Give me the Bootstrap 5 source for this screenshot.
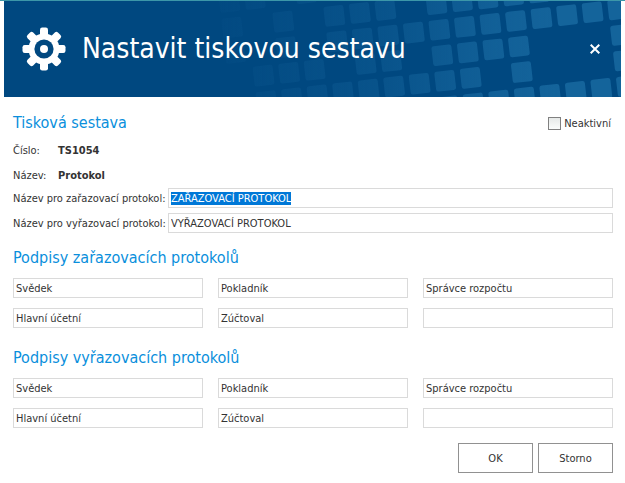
<!DOCTYPE html>
<html lang="cs">
<head>
<meta charset="utf-8">
<meta name="viewport" content="width=device-width, initial-scale=1">
<title>Nastavit tiskovou sestavu</title>
<link href="https://cdn.jsdelivr.net/npm/bootstrap@5.3.0/dist/css/bootstrap.min.css" rel="stylesheet">
<style>
  body { font-family: Tahoma, "DejaVu Sans Condensed", "Noto Sans", sans-serif; font-size: 11px; line-height: 15px; color: #333; background: #fff; border-top: 1px solid #3c97a9; }
  .banner { height: 96px; margin: 0 4px; padding: 0 18px; background: #004880; color: #fff; }
  .banner-tiles { position: absolute; top: 0; right: 0; }
  .banner-gear { width: 44px; height: 44px; }
  .banner h1 { font-size: 28px; line-height: 36px; margin: 0 0 0 16px; }
  .banner-close { width: 16px; height: 16px; }
  .dialog-body { padding: 15px 12px 10px 13px; }
  h2 { font-size: 16px; line-height: 22px; color: #0a8fdc; margin: 0; }
  h1, h2 { font-weight: 400; }
  .facts { grid-template-columns: 45px 1fr; row-gap: 10px; margin: 9px 0 5px; }
  .fields { display: grid; grid-template-columns: 155px 1fr; row-gap: 5px; }
  .signatures { display: grid; grid-template-columns: repeat(3, 1fr); gap: 10px 15px; margin-top: 9px; }
  .group-gap { margin-top: 14px; }
  .group-next { margin-top: 19px; }
  .form-control { height: 20px; min-height: 0; padding: 0 2px; font-size: 11px; line-height: 13px; color: #333; border-color: #dadada; }
  .form-control:focus { border-color: #dadada; box-shadow: none; color: #333; }
  .form-control::selection { background: #0078d7; color: #fff; }
  .inactive { gap: 3px; padding-right: 2px; }
  .inactive-box { appearance: none; width: 13px; height: 13px; margin: 0; border: 1px solid #808080; background: linear-gradient(#e6e9e8, #fafcfb); }
  .inactive-box:checked { background: #0078d7; }
  .btn { --bs-btn-font-size: 11px; --bs-btn-line-height: 15px; --bs-btn-color: #333; --bs-btn-border-color: #919191; --bs-btn-bg: #fff; --bs-btn-hover-color: #333; --bs-btn-hover-bg: #eef6fb; --bs-btn-hover-border-color: #919191; width: 75px; height: 30px; }
  .actions { gap: 5px; margin-top: 15px; }
</style>
</head>
<body>
<header class="banner position-relative overflow-hidden d-flex align-items-center">
  <svg class="banner-tiles" width="421" height="96" viewBox="200 1 421 96" aria-hidden="true">
    <defs>
      <linearGradient id="fade" gradientUnits="userSpaceOnUse" x1="210" y1="0" x2="560" y2="0">
        <stop offset="0" stop-color="#14649b" stop-opacity="0.06"/>
        <stop offset="0.5" stop-color="#14649b" stop-opacity="0.42"/>
        <stop offset="0.8" stop-color="#14649b" stop-opacity="0.85"/>
        <stop offset="1" stop-color="#14649b"/>
      </linearGradient>
      <mask id="fade-mask" maskUnits="userSpaceOnUse" x="200" y="0" width="421" height="97">
        <g id="tiles" fill="#fff" transform="translate(516 21) rotate(-6.5)"></g>
      </mask>
    </defs>
    <rect x="200" y="0" width="421" height="97" fill="url(#fade)" mask="url(#fade-mask)"/>
  </svg>
  <svg class="banner-gear position-relative flex-shrink-0" viewBox="-22 -22 44 44" fill="#fff" aria-hidden="true">
    <g>
      <rect x="-4" y="-21.5" width="8" height="43" rx="2.2"/>
      <rect x="-4" y="-21.5" width="8" height="43" rx="2.2" transform="rotate(45)"/>
      <rect x="-4" y="-21.5" width="8" height="43" rx="2.2" transform="rotate(90)"/>
      <rect x="-4" y="-21.5" width="8" height="43" rx="2.2" transform="rotate(135)"/>
    </g>
    <circle r="15.5"/>
    <circle r="9.6" fill="#004880"/>
    <circle r="4"/>
  </svg>
  <h1 class="position-relative flex-grow-1">Nastavit tiskovou sestavu</h1>
  <button type="button" class="banner-close position-relative border-0 bg-transparent p-0 d-flex align-items-center justify-content-center" aria-label="Zavřít">
    <svg width="10" height="10" viewBox="0 0 10 10" stroke="#fff" stroke-width="2" aria-hidden="true"><path d="M.7.7l8.6 8.6M9.3.7L.7 9.3"/></svg>
  </button>
</header>

<form class="dialog-body">
  <div class="d-flex justify-content-between">
    <h2>Tisková sestava</h2>
    <div class="inactive d-flex align-items-center">
      <input class="inactive-box" type="checkbox" id="inactive">
      <label for="inactive">Neaktivní</label>
    </div>
  </div>
  <dl class="facts d-grid">
    <dt class="fw-normal">Číslo:</dt><dd class="fw-bold m-0">TS1054</dd>
    <dt class="fw-normal">Název:</dt><dd class="fw-bold m-0">Protokol</dd>
  </dl>
  <div class="fields align-items-center">
    <label class="text-nowrap" for="name-in">Název pro zařazovací protokol:</label>
    <input class="form-control rounded-0" type="text" id="name-in" value="ZAŘAZOVACÍ PROTOKOL">
    <label class="text-nowrap" for="name-out">Název pro vyřazovací protokol:</label>
    <input class="form-control rounded-0" type="text" id="name-out" value="VYŘAZOVACÍ PROTOKOL">
  </div>

  <h2 class="group-gap" id="sign-in">Podpisy zařazovacích protokolů</h2>
  <div class="signatures" role="group" aria-labelledby="sign-in">
    <input class="form-control rounded-0" type="text" aria-label="Podpis 1" value="Svědek">
    <input class="form-control rounded-0" type="text" aria-label="Podpis 2" value="Pokladník">
    <input class="form-control rounded-0" type="text" aria-label="Podpis 3" value="Správce rozpočtu">
    <input class="form-control rounded-0" type="text" aria-label="Podpis 4" value="Hlavní účetní">
    <input class="form-control rounded-0" type="text" aria-label="Podpis 5" value="Zúčtoval">
    <input class="form-control rounded-0" type="text" aria-label="Podpis 6">
  </div>

  <h2 class="group-next" id="sign-out">Podpisy vyřazovacích protokolů</h2>
  <div class="signatures" role="group" aria-labelledby="sign-out">
    <input class="form-control rounded-0" type="text" aria-label="Podpis 1" value="Svědek">
    <input class="form-control rounded-0" type="text" aria-label="Podpis 2" value="Pokladník">
    <input class="form-control rounded-0" type="text" aria-label="Podpis 3" value="Správce rozpočtu">
    <input class="form-control rounded-0" type="text" aria-label="Podpis 4" value="Hlavní účetní">
    <input class="form-control rounded-0" type="text" aria-label="Podpis 5" value="Zúčtoval">
    <input class="form-control rounded-0" type="text" aria-label="Podpis 6">
  </div>

  <div class="actions d-flex justify-content-end">
    <button type="submit" class="btn rounded-0 p-0">OK</button>
    <button type="button" class="btn rounded-0 p-0">Storno</button>
  </div>
</form>
<script src="https://cdn.jsdelivr.net/npm/bootstrap@5.3.0/dist/js/bootstrap.bundle.min.js"></script>
<script>
  // Banner mosaic: occupied columns of each tilted row
  const rows = {
    '-2': [-11, -10, -8],
    '-1': [-11, -9, -7, -6, -5, -3, -2, -1, 0, 1],
    '0': [-11, -9, -7, -6, -5, -4, -3, -2, -1, 0, 1, 2, 3, 4],
    '1': [-10, -9, -8, -6, -5, -3, -2, -1, 0, 4],
    '2': [-10, -9, -8, -7, -6, -5, -4, -3, -2, 0, 4],
    '3': [-3, -2, -1, 0, 1, 2, 3, 4]
  };
  const tiles = document.getElementById('tiles'), pitch = 25.7;
  for (const [row, cols] of Object.entries(rows)) for (const col of cols) {
    const r = document.createElementNS('http://www.w3.org/2000/svg', 'rect');
    const a = { x: col * pitch - 10, y: row * pitch - 10, width: 20, height: 20, rx: 2.5 };
    for (const k in a) r.setAttribute(k, a[k]);
    tiles.appendChild(r);
  }
  const first = document.getElementById('name-in');
  first.focus();
  first.select();
</script>
</body>
</html>
